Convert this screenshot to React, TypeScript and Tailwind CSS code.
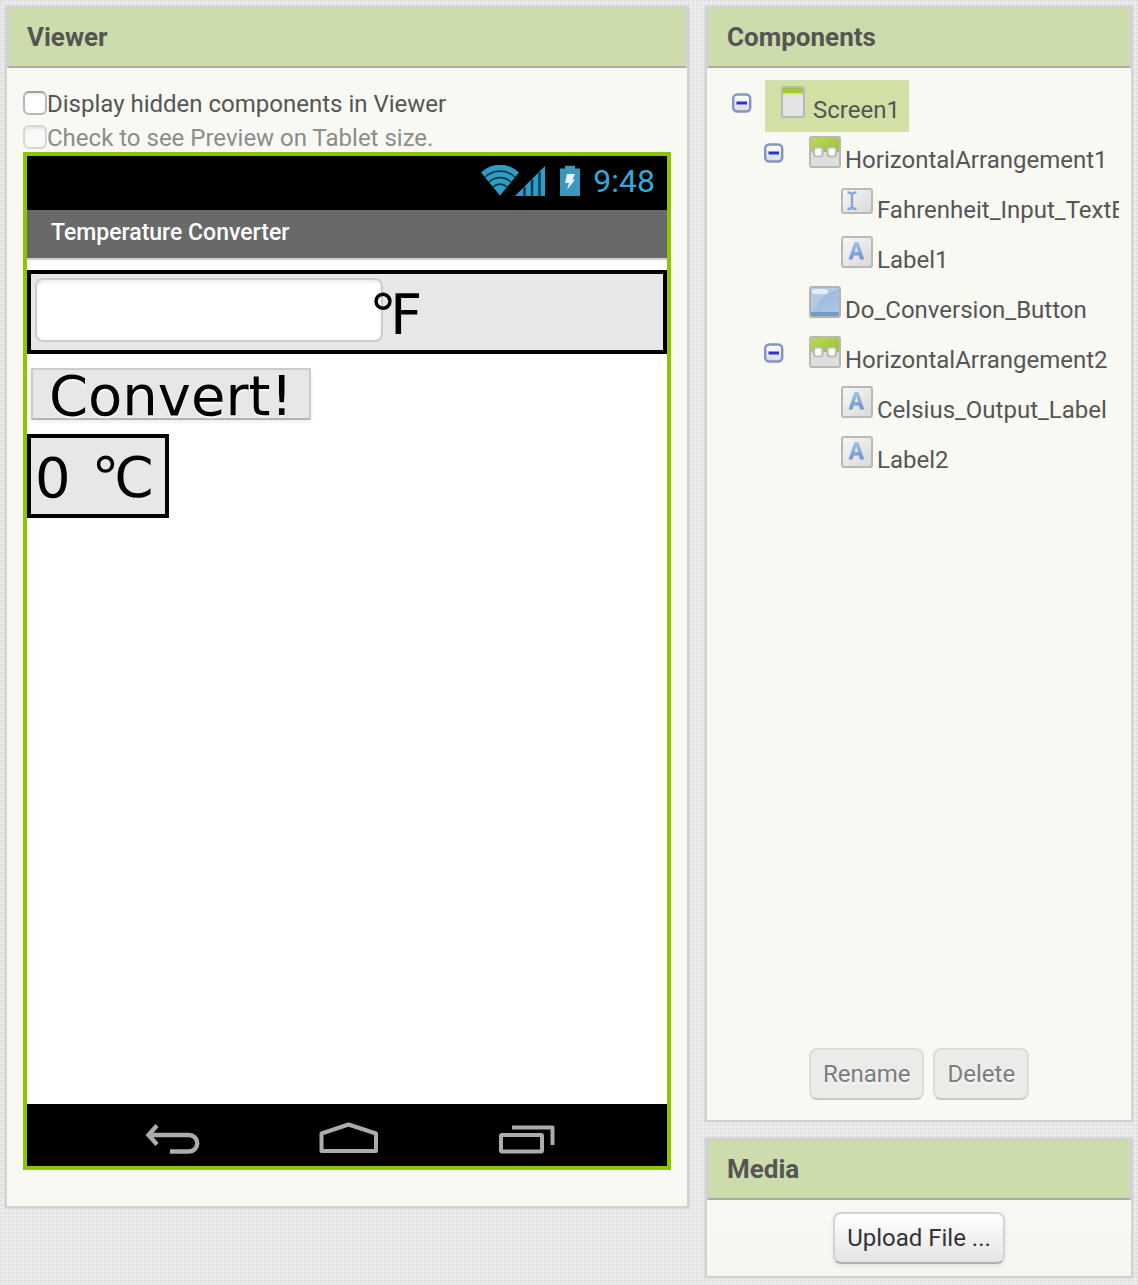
import { useState } from "react";
import type { ReactNode } from "react";

type NodeKind = "screen" | "arrangement" | "textbox" | "label" | "button";

interface TreeNode {
  name: string;
  kind: NodeKind;
  children?: TreeNode[];
}

const TREE: TreeNode = {
  name: "Screen1",
  kind: "screen",
  children: [
    {
      name: "HorizontalArrangement1",
      kind: "arrangement",
      children: [
        { name: "Fahrenheit_Input_TextBox", kind: "textbox" },
        { name: "Label1", kind: "label" },
      ],
    },
    { name: "Do_Conversion_Button", kind: "button" },
    {
      name: "HorizontalArrangement2",
      kind: "arrangement",
      children: [
        { name: "Celsius_Output_Label", kind: "label" },
        { name: "Label2", kind: "label" },
      ],
    },
  ],
};

function IconDefs() {
  return (
    <svg width="0" height="0" className="absolute" aria-hidden="true">
      <defs>
        <linearGradient id="greyFill" x1="0" y1="0" x2="1" y2="1">
          <stop offset="0" stopColor="#f8f8f8" />
          <stop offset="1" stopColor="#d8d8d8" />
        </linearGradient>
        <linearGradient id="greenFill" x1="0" y1="0" x2="1" y2="1">
          <stop offset="0" stopColor="#b9da5c" />
          <stop offset="1" stopColor="#9cbf2c" />
        </linearGradient>
        <linearGradient id="blueFill" x1="0" y1="0" x2="0.6" y2="1">
          <stop offset="0" stopColor="#94b3dc" />
          <stop offset="1" stopColor="#adc6e7" />
        </linearGradient>
        <linearGradient id="letterFill" x1="0" y1="0" x2="0" y2="1">
          <stop offset="0" stopColor="#a3c0e6" />
          <stop offset="1" stopColor="#6d96cf" />
        </linearGradient>
        <linearGradient id="toggleFill" x1="0" y1="0" x2="0" y2="1">
          <stop offset="0" stopColor="#ffffff" />
          <stop offset="1" stopColor="#d9dbe4" />
        </linearGradient>
      </defs>
    </svg>
  );
}

function KindIcon({ kind }: { kind: NodeKind }) {
  return (
    <svg width="32" height="32" viewBox="0 0 32 32" fill="none" className="shrink-0" aria-hidden="true">
      {kind === "screen" && (
        <>
          <rect x="5" y="1" width="22" height="30" rx="2" fill="#e4e4e4" />
          <path d="M5 3a2 2 0 0 1 2-2h18a2 2 0 0 1 2 2v4H5z" fill="#a3c53a" />
          <path d="M5 7h22v2H5z" fill="#d3dfae" />
          <rect x="5" y="1" width="22" height="30" rx="2" stroke="#b9b9b3" strokeWidth="2" />
        </>
      )}
      {kind === "arrangement" && (
        <>
          <rect x="1" y="1" width="30" height="30" rx="2" fill="#dedede" />
          <path d="M2 2h28v14H2z" fill="url(#greenFill)" />
          <rect x="5" y="11.500" width="8.500" height="9" rx="2.500" fill="#fff" stroke="#bcbcb4" strokeWidth="2.200" />
          <rect x="18.500" y="11.500" width="8.500" height="9" rx="2.500" fill="#fff" stroke="#bcbcb4" strokeWidth="2.200" />
          <rect x="1" y="1" width="30" height="30" rx="2" stroke="#b9b9b3" strokeWidth="2" />
        </>
      )}
      {kind === "textbox" && (
        <>
          <rect x="1" y="1" width="30" height="24" rx="2" transform="translate(0 2)" fill="url(#greyFill)" stroke="#b9b9b9" strokeWidth="2" />
          <path d="M6.500 6.500c2 0 4 .5 4.500 2 .5-1.500 2.500-2 4.500-2M11 8.500v12.500M6.500 23c2 0 4-.5 4.500-2 .5 1.500 2.500 2 4.500 2" stroke="#8aa9cf" strokeWidth="2.400" />
        </>
      )}
      {kind === "label" && (
        <>
          <rect x="1" y="1" width="30" height="30" rx="2" fill="url(#greyFill)" stroke="#b9b9b9" strokeWidth="2" />
          <path fillRule="evenodd" d="M13.500 6h4L23.300 23.500H19l-1.200-4h-5L11.600 23.500H7.600zM15.400 10.500 13.700 16h3.500z" fill="url(#letterFill)" />
        </>
      )}
      {kind === "button" && (
        <>
          <rect x="1" y="1" width="30" height="30" rx="2" fill="url(#blueFill)" />
          <path d="M2 2h28v1c-12 3-21 10-25 23H2z" fill="#b3cae9" />
          <rect x="3" y="3" width="16" height="5" rx="2.500" fill="#e3edf8" />
          <path d="M2 26h28v4H2z" fill="#7498cb" />
          <rect x="1" y="1" width="30" height="30" rx="2" stroke="#b3b3b3" strokeWidth="2" />
        </>
      )}
    </svg>
  );
}

function TreeItem({ node, selected, onSelect }: { node: TreeNode; selected: string; onSelect: (name: string) => void }) {
  const [open, setOpen] = useState(true);
  const isSelected = node.name === selected;
  const isRoot = node.kind === "screen";
  return (
    <li>
      <div className={isRoot ? "flex h-[52px] items-start" : "flex h-[50px] items-start"}>
        <div className={isRoot ? "w-8 shrink-0 pt-[13px]" : "w-8 shrink-0 pt-[11px]"}>
          {node.children && (
            <button type="button" aria-label={`Toggle ${node.name}`} onClick={() => setOpen(!open)} className="block">
              <svg width="20" height="20" viewBox="1 0 20 20" fill="none" aria-hidden="true" className="overflow-visible">
                <rect x="1.200" y="1.500" width="17" height="17" rx="4" fill="url(#toggleFill)" stroke="#8292ca" strokeWidth="2.400" />
                <path d="M4.500 10H15" stroke="#2f2fd8" strokeWidth="3" />
              </svg>
            </button>
          )}
        </div>
        <button
          type="button"
          onClick={() => onSelect(node.name)}
          className={
            "flex items-start gap-1 pr-[9px] pl-3 whitespace-nowrap " +
            (isRoot ? "h-[52px] pt-[6px] " : "h-[50px] pt-1 ") +
            (isSelected ? "bg-[#d2e0a6]" : "")
          }
        >
          <KindIcon kind={node.kind} />
          <span className="pt-2 leading-8">{node.name}</span>
        </button>
      </div>
      {node.children && open && (
        <ul className="pl-8">
          {node.children.map((child) => (
            <TreeItem key={child.name} node={child} selected={selected} onSelect={onSelect} />
          ))}
        </ul>
      )}
    </li>
  );
}

function Panel({ title, className, children }: { title: string; className?: string; children: ReactNode }) {
  return (
    <section className={"border-2 border-[#d2d2d2] bg-[#f8f9f3] shadow-[0_0_4px_rgba(0,0,0,0.08)] " + (className ?? "")}>
      <h2 className="h-[60px] border-x-2 border-b-2 border-x-[#d2d2d2] border-b-[#aaaaaa] bg-[#ccddab] px-[18px] text-[26px] leading-[58px] font-bold">
        {title}
      </h2>
      {children}
    </section>
  );
}

function StatusBar() {
  return (
    <div className="flex h-[54px] items-center justify-end bg-black pr-3 pb-1 text-[#33a9d6]">
      <svg width="66" height="32" viewBox="0 0 66 32" fill="none" aria-label="Wi-Fi and signal strength">
        <path d="M1 7.500a27 27 0 0 1 38 0L20 30.500z" fill="#2f9cc6" />
        <path d="M5 12a22 22 0 0 1 30 0M9 17a16 16 0 0 1 22 0M13 22a10 10 0 0 1 14 0" stroke="#0b3444" strokeWidth="1.600" />
        <path d="M35 31 65 1v30z" fill="#2f9cc6" />
        <path d="M44.500 22v9M52 14.500V31M59.500 7v24" stroke="#0f3c50" strokeWidth="2.500" />
      </svg>
      <svg width="22" height="32" viewBox="0 0 22 32" className="ml-[13px]" aria-label="Battery charging">
        <path d="M1 3.500h5V.8h10v2.700h5v27.500H1z" fill="#3a97bd" />
        <path d="M8 9h8l-2.500 5.500H16L8 25l2-7H6z" fill="#e8f4f8" />
      </svg>
      <span className="ml-3 text-[32px] leading-[50px]">9:48</span>
    </div>
  );
}

function NavBar() {
  return (
    <div className="h-[62px] bg-black">
      <svg width="640" height="62" viewBox="0 0 640 62" fill="none" stroke="#acacac" strokeWidth="4" className="w-full" aria-label="Back, home and recent apps">
        <path d="M130 21.500 121.500 31l8.500 9.500M122 31h40a8.200 8.200 0 0 1 0 16.500h-19" strokeWidth="4.400" />
        <path d="M294.500 47V29.500L321.500 20.500 349 29.500V47z" strokeLinejoin="round" />
        <rect x="474" y="31" width="41" height="16.500" rx="1" />
        <path d="M485 23.500h40.500V41" strokeLinejoin="round" />
      </svg>
    </div>
  );
}

function PhonePreview() {
  return (
    <div className="border-4 border-[#8fc404] bg-white">
      <StatusBar />
      <div className="h-[50px] border-b-2 border-[#d2d2d2] bg-[#696969] px-6 text-[23px] leading-[46px] font-medium text-white">
        Temperature Converter
      </div>
      <div className="flex min-h-[844px] flex-col items-start pt-[10px] font-['DejaVu_Sans',sans-serif] text-[56px] text-black">
        <div className="flex h-[84px] w-full items-start border-4 border-black bg-[#e7e7e7] px-1 pt-1">
          <input
            type="text"
            aria-label="Fahrenheit"
            className="h-16 w-[348px] rounded-lg border-2 border-[#cccccc] bg-white px-2 text-[28px] shadow-[inset_0_2px_4px_rgba(0,0,0,0.08)]"
          />
          <span className="-ml-[14px] leading-[74px]">℉</span>
        </div>
        <button
          type="button"
          className="mt-[14px] ml-1 h-[52px] border-2 border-[#cccccc] border-b-[#b3b3b3] bg-[#e7e7e7] px-4 leading-[52px] shadow-[0_2px_4px_rgba(0,0,0,0.08)] [text-shadow:0_2px_2px_rgba(255,255,255,0.8)]"
        >
          Convert!
        </button>
        <div className="mt-[14px] flex h-[84px] w-[142px] items-start border-4 border-black bg-[#e7e7e7] px-1 leading-[80px]">
          <span>0</span>
          <span className="ml-[3px] whitespace-pre"> ℃</span>
        </div>
      </div>
      <NavBar />
    </div>
  );
}

const CHECKBOX =
  "size-6 shrink-0 appearance-none rounded-[6px] border-2 border-[#b8b8b8] border-t-[#a0a0a0] bg-white checked:bg-[#8fc404] shadow-[inset_0_2px_2px_rgba(0,0,0,0.08)] disabled:border-[#d6d6d2] disabled:bg-[#f9f9f7]";

export default function App() {
  const [selected, setSelected] = useState("Screen1");
  return (
    <main className="flex min-h-screen items-start gap-4 bg-[#e9e9e9] bg-[radial-gradient(circle_at_1px_1px,#e1e1e1_1px,transparent_1px),radial-gradient(circle_at_3px_3px,#eeeeee_1px,transparent_1px)] bg-[size:4px_4px,4px_4px] px-[5px] py-[6px] font-[Roboto,sans-serif] text-2xl text-[#555555]">
      <IconDefs />
      <Panel title="Viewer" className="min-w-0 flex-1">
        <div className="px-4 pt-[18px] pb-9">
          <label className="flex h-[34px] items-center leading-9">
            <input type="checkbox" className={CHECKBOX} />
            <span className="pt-[2px]">Display hidden components in Viewer</span>
          </label>
          <label className="flex h-8 items-center pt-[2px] leading-9 text-[#8c8c8c]">
            <input type="checkbox" disabled className={CHECKBOX} />
            <span className="pt-[2px]">Check to see Preview on Tablet size.</span>
          </label>
          <PhonePreview />
        </div>
      </Panel>
      <div className="flex w-[428px] shrink-0 flex-col gap-4">
        <Panel title="Components">
          <div className="px-3 pt-3 pb-5">
            <div className="min-h-[968px] overflow-hidden pl-[14px]">
              <ul>
                <TreeItem node={TREE} selected={selected} onSelect={setSelected} />
              </ul>
            </div>
            <div className="flex justify-center gap-[9px]">
              {["Rename", "Delete"].map((name) => (
                <button
                  key={name}
                  type="button"
                  disabled
                  className="h-[52px] rounded-lg border-2 border-[#dcdcda] border-b-[#c8c8c6] bg-[#ebebe9] px-3 text-[#7d7d7d] [text-shadow:0_2px_2px_rgba(255,255,255,0.8)]"
                >
                  {name}
                </button>
              ))}
            </div>
          </div>
        </Panel>
        <Panel title="Media">
          <div className="flex justify-center bg-linear-to-b from-[#f8f9f3] to-[#f5f6f0] pt-3 pb-3">
            <button
              type="button"
              className="h-[52px] rounded-lg border-2 border-[#d4d4d4] border-b-[#b0b0b0] bg-linear-to-b from-white to-[#e4e4e6] px-3 text-[#333333] shadow-[0_2px_4px_rgba(0,0,0,0.08)]"
            >
              Upload File ...
            </button>
          </div>
        </Panel>
      </div>
    </main>
  );
}
